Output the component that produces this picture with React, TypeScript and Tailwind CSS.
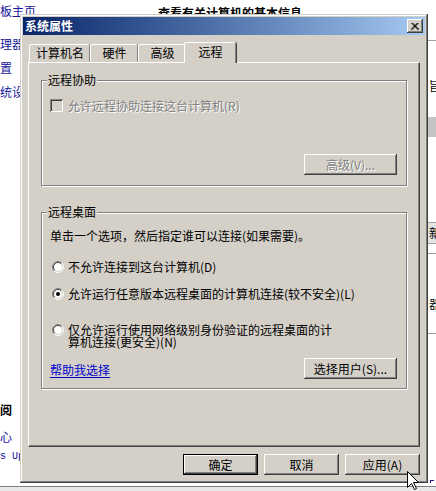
import React from 'react';

type BtnProps = {
  children: React.ReactNode;
  className?: string;
  disabled?: boolean;
  isDefault?: boolean;
};

// classic 3D button
function Button({ children, className = '', disabled = false, isDefault = false }: BtnProps) {
  return (
    <div
      className={`flex h-[21px] items-center justify-center bg-[#d4d0c8] ${
        isDefault
          ? 'border border-black shadow-[inset_-1px_-1px_#404040,inset_1px_1px_#fff,inset_-2px_-2px_#808080]'
          : 'shadow-[inset_-1px_-1px_#404040,inset_1px_1px_#fff,inset_-2px_-2px_#808080,inset_2px_2px_#d4d0c8]'
      } ${disabled ? 'text-[#808080] [text-shadow:1px_1px_0_#fff]' : 'text-black'} ${className}`}
    >
      {children}
    </div>
  );
}

function Radio({ checked = false }: { checked?: boolean }) {
  return (
    <svg width="12" height="12" viewBox="0 0 12 12" className="shrink-0">
      <circle cx="6" cy="6" r="5" fill="#fff" />
      <path d="M2.1 9.9 A5.5 5.5 0 0 1 9.9 2.1" stroke="#808080" fill="none" />
      <path d="M9.9 2.1 A5.5 5.5 0 0 1 2.1 9.9" stroke="#fff" fill="none" />
      <path d="M2.8 9.2 A4.5 4.5 0 0 1 9.2 2.8" stroke="#404040" fill="none" />
      <path d="M9.2 2.8 A4.5 4.5 0 0 1 2.8 9.2" stroke="#d4d0c8" fill="none" />
      {checked && <circle cx="6" cy="6" r="2" fill="#000" />}
    </svg>
  );
}

function Tab({ label, active = false, width }: { label: string; active?: boolean; width: string }) {
  if (active) {
    return (
      <div
        className={`relative z-10 mx-[-2px] mb-[-1px] flex h-[21px] justify-center rounded-t-[2px] border-l border-t border-white bg-[#d4d0c8] pt-[3px] shadow-[inset_-1px_0_#808080,1px_0_#404040] ${width}`}
      >
        {label}
      </div>
    );
  }
  return (
    <div
      className={`flex h-[18px] justify-center rounded-t-[2px] border-l border-t border-white bg-[#d4d0c8] pt-[2px] shadow-[inset_-1px_0_#808080,1px_0_#404040] ${width}`}
    >
      {label}
    </div>
  );
}

function GroupBox({ title, className, children }: { title: string; className: string; children: React.ReactNode }) {
  return (
    <div className={`relative w-[366px] border border-[#808080] shadow-[inset_1px_1px_#fff,1px_1px_#fff] ${className}`}>
      <span className="absolute left-[5px] top-[-7px] bg-[#d4d0c8] px-[1px]">{title}</span>
      {children}
    </div>
  );
}

export default function App() {
  return (
    <div className="relative h-[491px] w-[436px] overflow-hidden bg-white font-['Noto_Sans_CJK_SC',sans-serif] text-[12px] leading-[12px] text-black">
      {/* page behind the dialog */}
      <div className="flex h-full flex-col">
        <div className="flex flex-1">
          <div className="ml-[-36px] flex w-[120px] flex-col whitespace-nowrap text-[#151599]">
            <span className="mt-[5px]">控制面板主页</span>
            <span className="mt-[21px]">设备管理器</span>
            <span className="mt-[12px]">远程设置</span>
            <span className="mt-[12px]">高级系统设置</span>
            <span className="mt-[306px] font-bold text-black">另请参阅</span>
            <span className="mt-[15px]">操作中心</span>
            <span className="mt-[8px] font-['Liberation_Mono',monospace] text-[10px]">Windows Update</span>
          </div>
          <div className="flex-1 pl-[74px] pt-[7px]">
            <span className="whitespace-nowrap font-bold">查看有关计算机的基本信息</span>
          </div>
          <div className="flex w-[8px] flex-col whitespace-nowrap">
            <div className="mt-[40px] h-px bg-[#a0a0a0]" />
            <span className="ml-px mt-[39px]">旨</span>
            <div className="mt-[25px] h-[20px] bg-[#c4c4c4]" />
            <div className="mt-[85px] h-[22px] border-y border-[#a0a0a0] bg-[#e4e4e4] pl-px pt-[4px]">新</div>
            <div className="mt-[9px] h-px bg-[#a0a0a0]" />
            <span className="ml-px mt-[44px]">器</span>
            <div className="mt-[23px] h-px bg-[#a0a0a0]" />
            <div className="ml-[2px] mt-[146px] h-[3px] w-[4px] border-l border-t border-[#151599]" />
          </div>
        </div>
        <div className="h-[5px] border-t border-[#808080] bg-[#e8e8e8]" />
      </div>

      {/* dialog */}
      <div className="absolute left-[20px] top-[14px] flex h-[469px] w-[408px] flex-col bg-[#d4d0c8] p-[3px] shadow-[inset_-1px_-1px_#404040,inset_1px_1px_#d4d0c8,inset_-2px_-2px_#808080,inset_2px_2px_#fff]">
        <div className="flex h-[18px] items-center justify-between bg-linear-to-r from-[#0a246a] to-[#a6caf0] pl-[2px] pr-[2px]">
          <span className="font-bold text-white">系统属性</span>
          <div className="flex h-[14px] w-[16px] items-center justify-center bg-[#d4d0c8] shadow-[inset_-1px_-1px_#404040,inset_1px_1px_#fff,inset_-2px_-2px_#808080,inset_2px_2px_#d4d0c8]">
            <svg width="8" height="7" viewBox="0 0 8 7">
              <path d="M0.5 0 L7.5 7 M7.5 0 L0.5 7 M1.5 0 L8 6.5 M6.5 0 L0 6.5" stroke="#000" strokeWidth="1" />
            </svg>
          </div>
        </div>

        <div className="flex flex-col px-[5px] pt-[7px]">
          <div className="flex h-[20px] items-end pl-[1px]">
            <Tab label="计算机名" width="w-[61px]" />
            <Tab label="硬件" width="w-[48px]" />
            <Tab label="高级" width="w-[48px]" />
            <Tab label="远程" width="w-[52px]" active />
          </div>

          <div className="h-[385px] w-[392px] border-b border-l border-r border-t border-b-[#404040] border-l-white border-r-[#404040] border-t-white pl-[12px] pt-[17px] shadow-[inset_-1px_-1px_#808080]">
            <GroupBox title="远程协助" className="flex h-[106px] flex-col pl-[8px] pt-[18px]">
              <div className="flex items-center">
                <div className="h-[13px] w-[13px] bg-[#d4d0c8] shadow-[inset_1px_1px_#808080,inset_-1px_-1px_#fff,inset_2px_2px_#404040,inset_-2px_-2px_#d4d0c8]" />
                <span className="ml-[5px] text-[#808080] [text-shadow:1px_1px_0_#fff]">允许远程协助连接这台计算机(R)</span>
              </div>
              <Button disabled className="mr-[9px] mt-[42px] w-[93px] self-end">
                高级(V)...
              </Button>
            </GroupBox>

            <GroupBox title="远程桌面" className="mt-[26px] flex h-[177px] flex-col pl-[8px] pt-[17px]">
              <p>单击一个选项，然后指定谁可以连接(如果需要)。</p>
              <div className="mt-[19px] flex items-center pl-[2px]">
                <Radio />
                <span className="ml-[4px]">不允许连接到这台计算机(D)</span>
              </div>
              <div className="mt-[15px] flex items-center pl-[2px]">
                <Radio checked />
                <span className="ml-[4px]">允许运行任意版本远程桌面的计算机连接(较不安全)(L)</span>
              </div>
              <div className="mt-[24px] flex items-start pl-[2px]">
                <Radio />
                <span className="ml-[4px]">
                  仅允许运行使用网络级别身份验证的远程桌面的计
                  <br />
                  算机连接(更安全)(N)
                </span>
              </div>
              <div className="mt-[10px] flex items-center justify-between">
                <span className="mt-[3px] text-[#0000cc] underline underline-offset-[2px]">帮助我选择</span>
                <Button className="mr-[9px] w-[93px]">选择用户(S)...</Button>
              </div>
            </GroupBox>
          </div>

          <div className="mt-[7px] flex justify-end gap-[6px]">
            <Button isDefault className="w-[75px]">确定</Button>
            <Button className="w-[75px]">取消</Button>
            <Button className="w-[75px]">应用(A)</Button>
          </div>
        </div>
      </div>

      {/* mouse pointer */}
      <svg className="absolute left-[407px] top-[471px]" width="13" height="20" viewBox="0 0 13 20">
        <path d="M0.5 0.5 L0.5 16.5 L4.5 12.5 L7.5 18.5 L9.5 17.5 L6.5 11.5 L11.5 11.5 Z" fill="#fff" stroke="#000" />
      </svg>
    </div>
  );
}
